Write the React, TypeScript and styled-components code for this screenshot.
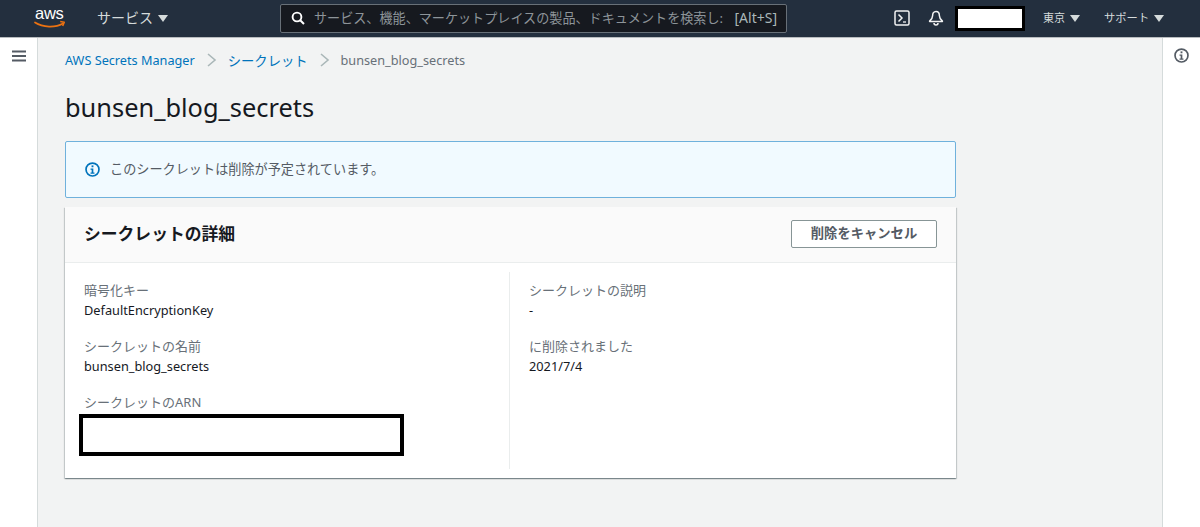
import styled, { createGlobalStyle } from 'styled-components';

const GlobalStyle = createGlobalStyle`
  html, body {
    margin: 0;
    height: 100%;
    overflow: hidden;
    background: #f2f3f3;
    font-family: 'Noto Sans', 'Noto Sans CJK JP', sans-serif;
  }
  #root { height: 100%; }
`;

const Page = styled.div`
  display: flex;
  flex-direction: column;
  width: 1200px;
  height: 527px;
  overflow: hidden;
`;

const TopNav = styled.header`
  display: flex;
  align-items: center;
  flex: none;
  height: 36px;
  padding-bottom: 1px;
  border-bottom: 1px solid #b8bcbf;
  background: #232f3e;
  color: #d5dbdb;
`;

const Logo = styled.svg`
  flex: none;
  width: 32px;
  height: 28px;
  margin-left: 34px;
`;

const NavMenu = styled.div<{ $size?: number; $left?: number }>`
  display: flex;
  align-items: center;
  gap: 5px;
  margin-left: ${({ $left }) => $left ?? 0}px;
  font-size: ${({ $size }) => $size ?? 14}px;
  white-space: nowrap;
  color: #d5dbdb;
`;

const NavLabel = styled.span`
  padding-bottom: 2px;
`;

const Caret = styled.span`
  display: inline-block;
  width: 0;
  height: 0;
  border-left: 5px solid transparent;
  border-right: 5px solid transparent;
  border-top: 7px solid #d5dbdb;
`;

const SearchBox = styled.div`
  display: flex;
  align-items: center;
  box-sizing: border-box;
  width: 507px;
  height: 29px;
  margin-left: 112px;
  padding: 0 9px 0 10px;
  border: 1px solid #687078;
  border-radius: 2px;
  background: #16191f;
`;

const SearchText = styled.span`
  flex: 1;
  min-width: 0;
  overflow: hidden;
  margin-left: 9px;
  padding-bottom: 2px;
  font-size: 13.1px;
  white-space: nowrap;
  color: #8d9499;
`;

const Shortcut = styled.span`
  flex: none;
  margin-left: 10px;
  padding-bottom: 1px;
  font-size: 14px;
  color: #aab7b8;
`;

const NavRight = styled.div`
  display: flex;
  align-items: center;
  margin-left: 107px;
`;

const Icon = styled.svg<{ $right?: number }>`
  flex: none;
  display: block;
  margin-right: ${({ $right }) => $right ?? 0}px;
`;

const UserMask = styled.div`
  box-sizing: border-box;
  width: 70px;
  height: 25px;
  margin: 0 18px 0 11px;
  border: 3px solid #000;
  background: #fff;
`;

const Body = styled.div`
  display: flex;
  flex: 1;
  min-height: 0;
`;

const SideRail = styled.aside<{ $side: 'left' | 'right' }>`
  display: flex;
  justify-content: center;
  flex: none;
  box-sizing: border-box;
  width: 38px;
  padding-top: ${({ $side }) => ($side === 'left' ? 12 : 10)}px;
  background: #fff;
  border-${({ $side }) => ($side === 'left' ? 'right' : 'left')}: 1px solid #d5dbdb;
`;

const Main = styled.main`
  flex: 1;
  min-width: 0;
  padding: 12px 0 0 27px;
  background: #f2f3f3;
`;

const Content = styled.div`
  width: 891px;
`;

const Breadcrumbs = styled.nav`
  display: flex;
  align-items: center;
  height: 20px;
  font-size: 12.7px;
`;

const Crumb = styled.a<{ $cjk?: boolean }>`
  font-size: ${({ $cjk }) => ($cjk ? 13.3 : 12.7)}px;
  color: #0073bb;
  text-decoration: none;
`;

const CrumbCurrent = styled.span`
  color: #687078;
`;

const Chevron = styled.svg`
  flex: none;
  width: 12px;
  height: 16px;
  margin: 0 10px 0 11px;
`;

const Title = styled.h1`
  margin: 19px 0 0;
  font-size: 25.4px;
  font-weight: 400;
  line-height: 36px;
  color: #16191f;
`;

const Alert = styled.div`
  display: flex;
  align-items: center;
  gap: 10px;
  box-sizing: border-box;
  height: 57px;
  margin-top: 16px;
  padding: 0 19px;
  border: 1px solid #6fb1dc;
  border-radius: 2px;
  background: #f1faff;
  font-size: 13.15px;
  color: #545b64;
`;

const AlertText = styled.span`
  padding-bottom: 3px;
`;

const Card = styled.section`
  margin-top: 9px;
  background: #fff;
  box-shadow: 0 1px 1px 0 rgba(0, 28, 36, 0.3), 1px 1px 1px 0 rgba(0, 28, 36, 0.15), -1px 1px 1px 0 rgba(0, 28, 36, 0.15);
`;

const CardHeader = styled.div`
  display: flex;
  align-items: center;
  justify-content: space-between;
  box-sizing: border-box;
  height: 56px;
  padding: 0 19px;
  border-bottom: 1px solid #eaeded;
  background: #fafafa;
`;

const CardTitle = styled.h2`
  margin: 0 0 3px;
  font-size: 16.8px;
  font-weight: 700;
  color: #16191f;
`;

const Button = styled.button`
  box-sizing: border-box;
  width: 146px;
  height: 28px;
  margin-bottom: 2px;
  padding: 0 0 2px;
  border: 1px solid #879596;
  border-radius: 2px;
  background: #fff;
  font-family: inherit;
  font-size: 13.3px;
  font-weight: 700;
  color: #545b64;
`;

const CardBody = styled.div`
  display: grid;
  grid-template-columns: 444px 1fr;
  height: 206px;
  padding-top: 9px;
`;

const Column = styled.div<{ $divider?: boolean }>`
  display: flex;
  flex-direction: column;
  gap: 16px;
  box-sizing: border-box;
  height: 197px;
  padding: 8px 19px 0;
  ${({ $divider }) => $divider && 'border-left: 1px solid #eaeded;'}
`;

const Field = styled.div`
  display: flex;
  flex-direction: column;
`;

const FieldLabel = styled.div`
  height: 20px;
  font-size: 13px;
  line-height: 20px;
  color: #687078;
`;

const FieldValue = styled.div`
  height: 20px;
  font-size: 12.75px;
  line-height: 20px;
  color: #16191f;
`;

const ArnMask = styled.div`
  box-sizing: border-box;
  width: 325px;
  height: 42px;
  margin: 2px 0 0 -5px;
  border: 4px solid #000;
  background: #fff;
`;

const InfoIcon = ({ color, size }: { color: string; size: number }) => (
  <Icon width={size} height={size} viewBox="0 0 16 16" fill="none">
    <circle cx="8" cy="8" r="6.9" stroke={color} strokeWidth="1.8" />
    <rect x="7" y="3.6" width="2" height="2" fill={color} />
    <path d="M5.9 7h3v4.2h1.2v1.2H5.9v-1.2h1.2V8.2H5.9z" fill={color} />
  </Icon>
);

const ChevronIcon = () => (
  <Chevron viewBox="0 0 12 16" fill="none">
    <path d="M2 2l7 6-7 6" stroke="#aab7b8" strokeWidth="1.6" />
  </Chevron>
);

const App = () => {
  return (
    <Page>
      <GlobalStyle />
      <TopNav>
        <Logo viewBox="0 0 32 28" fill="none">
          <text x="1" y="15" fontFamily="'Liberation Sans', sans-serif" fontSize="16.5" fill="#fff" letterSpacing="-0.3">aws</text>
          <path d="M1 18.5c8 5 20 5.5 28 1" stroke="#ec7211" strokeWidth="1.7" strokeLinecap="round" />
          <path d="M26.2 17.6l4.1.6-1.6 3.8" stroke="#ec7211" strokeWidth="1.5" strokeLinejoin="round" />
        </Logo>
        <NavMenu $left={31}>
          <NavLabel>サービス</NavLabel>
          <Caret />
        </NavMenu>
        <SearchBox>
          <Icon width="14" height="14" viewBox="0 0 14 14" fill="none">
            <circle cx="6" cy="6" r="4.4" stroke="#fff" strokeWidth="1.9" />
            <path d="M9.2 9.2l3.8 3.8" stroke="#fff" strokeWidth="2" />
          </Icon>
          <SearchText>サービス、機能、マーケットプレイスの製品、ドキュメントを検索し:</SearchText>
          <Shortcut>[Alt+S]</Shortcut>
        </SearchBox>
        <NavRight>
          <Icon $right={18} width="16" height="16" viewBox="0 0 16 16" fill="none">
            <rect x="1" y="1" width="14" height="14" rx="1.5" stroke="#f2f3f3" strokeWidth="1.5" />
            <path d="M4.5 4.5l3.5 3.5-3.5 3.5" stroke="#f2f3f3" strokeWidth="1.5" />
            <path d="M9 12h3" stroke="#f2f3f3" strokeWidth="1.3" />
          </Icon>
          <Icon width="16" height="16" viewBox="0 0 16 16" fill="none">
            <path d="M8 1.5c-2.4 0-3.4 2-3.4 4.2 0 2.4-1 3.6-3 5.4v.4h12.8v-.4c-2-1.8-3-3-3-5.4C11.4 3.5 10.4 1.5 8 1.5z" stroke="#f2f3f3" strokeWidth="1.5" strokeLinejoin="round" />
            <path d="M6 13a2 2 0 0 0 4 0" stroke="#f2f3f3" strokeWidth="1.5" />
          </Icon>
          <UserMask />
          <NavMenu $size={11}>
            <NavLabel>東京</NavLabel>
            <Caret />
          </NavMenu>
          <NavMenu $size={11.3} $left={24}>
            <NavLabel>サポート</NavLabel>
            <Caret />
          </NavMenu>
        </NavRight>
      </TopNav>
      <Body>
        <SideRail $side="left">
          <Icon width="14" height="12" viewBox="0 0 14 12" fill="none">
            <path d="M0 1.5h14M0 6h14M0 10.5h14" stroke="#545b64" strokeWidth="2" />
          </Icon>
        </SideRail>
        <Main>
          <Content>
            <Breadcrumbs>
              <Crumb>AWS Secrets Manager</Crumb>
              <ChevronIcon />
              <Crumb $cjk>シークレット</Crumb>
              <ChevronIcon />
              <CrumbCurrent>bunsen_blog_secrets</CrumbCurrent>
            </Breadcrumbs>
            <Title>bunsen_blog_secrets</Title>
            <Alert>
              <InfoIcon color="#0073bb" size={15} />
              <AlertText>このシークレットは削除が予定されています。</AlertText>
            </Alert>
            <Card>
              <CardHeader>
                <CardTitle>シークレットの詳細</CardTitle>
                <Button>削除をキャンセル</Button>
              </CardHeader>
              <CardBody>
                <Column>
                  <Field>
                    <FieldLabel>暗号化キー</FieldLabel>
                    <FieldValue>DefaultEncryptionKey</FieldValue>
                  </Field>
                  <Field>
                    <FieldLabel>シークレットの名前</FieldLabel>
                    <FieldValue>bunsen_blog_secrets</FieldValue>
                  </Field>
                  <Field>
                    <FieldLabel>シークレットのARN</FieldLabel>
                    <ArnMask />
                  </Field>
                </Column>
                <Column $divider>
                  <Field>
                    <FieldLabel>シークレットの説明</FieldLabel>
                    <FieldValue>-</FieldValue>
                  </Field>
                  <Field>
                    <FieldLabel>に削除されました</FieldLabel>
                    <FieldValue>2021/7/4</FieldValue>
                  </Field>
                </Column>
              </CardBody>
            </Card>
          </Content>
        </Main>
        <SideRail $side="right">
          <InfoIcon color="#545b64" size={15} />
        </SideRail>
      </Body>
    </Page>
  );
};

export default App;
